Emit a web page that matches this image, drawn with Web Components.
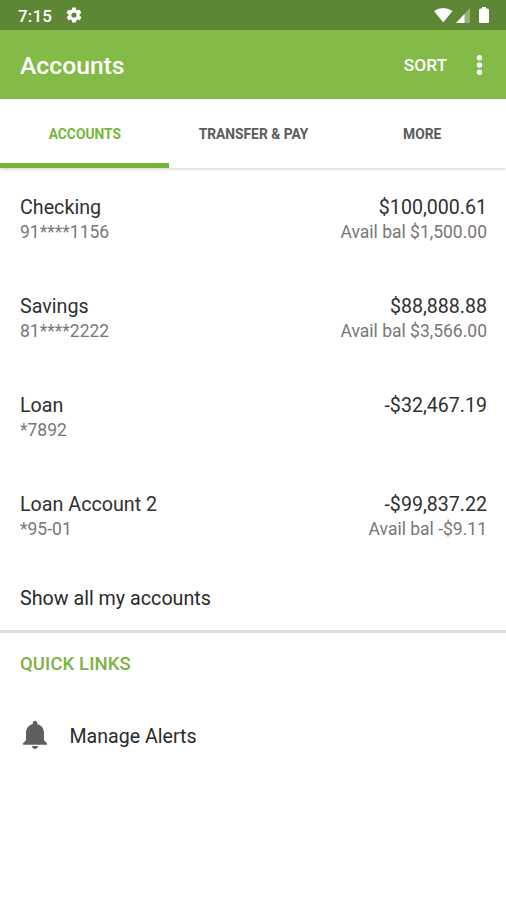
<!DOCTYPE html>
<html lang="en"><head><meta charset="utf-8"><title>Accounts</title>
<style>html,body{margin:0;height:100%;background:#fff;overflow:hidden}body{font-family:Roboto,sans-serif}</style></head>
<body><bank-app></bank-app>
<script>
const define=(name,html,setup)=>customElements.define(name,class extends HTMLElement{
  connectedCallback(){
    if(this.shadowRoot)return;
    const t=document.createElement('template');t.innerHTML=html;
    this.attachShadow({mode:'open'}).append(t.content.cloneNode(true));
    if(setup)setup(this);
  }
});
define('status-bar',`<style>:host{display:flex;height:30px;background:#5d8735;color:#fff;align-items:center;padding:0 14px 0 18px;box-sizing:border-box}
span{font:500 17px/30px Roboto,sans-serif;letter-spacing:.15px;margin-right:13px;padding-top:2px}svg{display:block;fill:#fff}.r{margin-left:auto;display:flex;align-items:center;gap:2px;margin-top:1px}</style>
<span>7:15</span>
<svg width="18" height="18" viewBox="0 0 24 24"><path d="M19.4 13a7.5 7.5 0 0 0 0-2l2.1-1.6c.2-.2.2-.4.1-.6l-2-3.500c-.1-.2-.4-.3-.6-.2l-2.500 1a7.300 7.300 0 0 0-1.700-1l-.4-2.600a.5.5 0 0 0-.5-.5h-4a.5.5 0 0 0-.5.4l-.4 2.700a7.700 7.700 0 0 0-1.700 1l-2.500-1c-.2-.1-.5 0-.6.2l-2 3.500c-.1.2-.1.4.1.6L4.600 11a7.500 7.500 0 0 0 0 2l-2.100 1.600c-.2.2-.2.4-.1.6l2 3.500c.1.2.4.3.6.2l2.500-1c.5.4 1.100.7 1.700 1l.4 2.600c0 .3.2.5.5.5h4c.2 0 .5-.2.500-.4l.4-2.700a7.700 7.700 0 0 0 1.700-1l2.500 1c.2.1.5 0 .6-.2l2-3.500c.1-.2.1-.4-.1-.6zM12 15.500a3.500 3.500 0 1 1 0-7 3.500 3.500 0 0 1 0 7z"/></svg>
<div class="r"><svg width="20" height="18" viewBox="0 0 20 18"><path d="M0 4Q9-2 18.500 4L9.200 15.500z"/></svg>
<svg width="15" height="18" viewBox="0 0 15 18"><path opacity=".35" d="M14 1v15H0z"/><path d="M8.500 6.900V16H0z"/></svg>
<svg width="19" height="20" viewBox="-3 0 19 20"><path d="M6 1h4v1.500h1.500q1.500 0 1.500 1.500v12q0 1-1 1H4q-1 0-1-1V4q0-1.500 1.500-1.500H6z"/></svg></div>`);
define('app-bar',`<style>:host{display:flex;height:69px;background:#83ba48;color:#fff;align-items:center;padding:0 23px 0 20px;box-sizing:border-box}
h1{font:500 24.700px/30px Roboto,sans-serif;margin:2px 0 0;flex:1}b{font:500 17.300px/22px Roboto,sans-serif;margin:1px 29px 0 0}svg{display:block;fill:#fff}</style>
<h1><slot></slot></h1><b>SORT</b><svg width="7" height="22" viewBox="0 0 7 22"><circle cx="3.500" cy="3.700" r="2.700"/><circle cx="3.500" cy="11" r="2.700"/><circle cx="3.500" cy="18.300" r="2.700"/></svg>`);
define('tab-item',`<style>:host{display:flex;flex:1;height:69px;align-items:center;justify-content:center;box-sizing:border-box;padding:6px 0 0 1px;font:700 13.800px/16px Roboto,sans-serif;color:#5b5b5b;border-bottom:5px solid transparent}
:host([active]){color:#74b837;border-color:#76b43a}</style><span><slot></slot></span>`);
define('tab-bar',`<style>:host{display:flex;height:69px;box-shadow:0 1px 3px rgba(0,0,0,.2)}</style><slot></slot>`);
define('account-row',`<style>:host{display:flex;height:99px;box-sizing:border-box;justify-content:space-between;padding:28px 19px 0 20px}
.r{text-align:right}.m{font:400 19.700px/24px Roboto,sans-serif;color:#303030}.s{font:400 17.500px/25px Roboto,sans-serif;color:#777}.r .m{font-size:19.600px}</style>
<div><div class="m"><span id="n"></span></div><div class="s"><span id="c"></span></div></div>
<div class="r"><div class="m"><span id="a"></span></div><div class="s"><span id="v"></span></div></div>`,
h=>{for(const [k,a] of [['n','name'],['c','number'],['a','amount'],['v','available']])h.shadowRoot.getElementById(k).textContent=h.getAttribute(a)||''});
define('show-all',`<style>:host{display:block;height:69px;box-sizing:border-box;padding:23px 20px 0;font:400 19.700px/24px Roboto,sans-serif;color:#2a2a2a;border-bottom:3px solid #dcdcdc}</style><span><slot></slot></span>`);
define('section-title',`<style>:host{display:block;padding:19px 20px 0;font:500 18.500px/24px Roboto,sans-serif;letter-spacing:.1px;color:#7cb342}</style><span><slot></slot></span>`);
define('quick-link',`<style>:host{display:flex;align-items:center;gap:22.500px;padding:44px 23px 0;font:400 19.600px/32px Roboto,sans-serif;color:#2a2a2a}svg{display:block;fill:#5f5f5f;margin-bottom:4px}</style>
<svg width="24" height="29" viewBox="4 2 16 20" preserveAspectRatio="none"><path d="M12 22c1.100 0 2-.9 2-2h-4c0 1.100.9 2 2 2zm6-6v-5c0-3.070-1.640-5.640-4.500-6.320V4c0-.83-.67-1.500-1.500-1.500s-1.500.67-1.500 1.500v.68C7.630 5.360 6 7.920 6 11v5l-2 2v1h16v-1z"/></svg><span><slot></slot></span>`);
define('bank-app',`<style>:host{display:block;width:506px;height:900px;background:#fff}</style>
<status-bar></status-bar><app-bar>Accounts</app-bar>
<tab-bar><tab-item active>ACCOUNTS</tab-item><tab-item>TRANSFER &amp; PAY</tab-item><tab-item>MORE</tab-item></tab-bar>
<account-row name="Checking" number="91****1156" amount="$100,000.61" available="Avail bal $1,500.00"></account-row>
<account-row name="Savings" number="81****2222" amount="$88,888.88" available="Avail bal $3,566.00"></account-row>
<account-row name="Loan" number="*7892" amount="-$32,467.19"></account-row>
<account-row name="Loan Account 2" number="*95-01" amount="-$99,837.22" available="Avail bal -$9.11"></account-row>
<show-all>Show all my accounts</show-all><section-title>QUICK LINKS</section-title><quick-link>Manage Alerts</quick-link>`);
</script></body></html>
